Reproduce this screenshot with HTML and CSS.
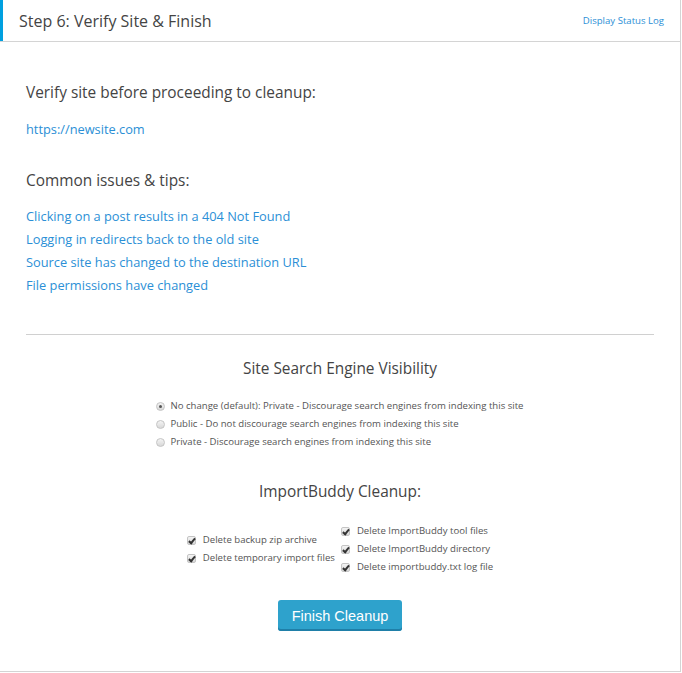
FILE: index.html
```html
<!DOCTYPE html>
<html lang="en">
<head>
  <meta charset="UTF-8" />
  <title>Step 6: Verify Site &amp; Finish</title>
  <link rel="stylesheet" href="styles.css">
</head>
<body>
  <div class="panel">
    <div class="panel-head">
      <h2>Step 6: Verify Site &amp; Finish</h2>
      <a href="#" class="status-link">Display Status Log</a>
    </div>

    <div class="panel-body">
      <h3>Verify site before proceeding to cleanup:</h3>
      <p class="site-url"><a href="#">https://newsite.com</a></p>

      <h3 class="tips-title">Common issues &amp; tips:</h3>
      <ul class="tips">
        <li><a href="#">Clicking on a post results in a 404 Not Found</a></li>
        <li><a href="#">Logging in redirects back to the old site</a></li>
        <li><a href="#">Source site has changed to the destination URL</a></li>
        <li><a href="#">File permissions have changed</a></li>
      </ul>

      <hr />

      <h3 class="center-title">Site Search Engine Visibility</h3>
      <div class="radios">
        <label><input type="radio" name="visibility" checked /> No change (default): Private - Discourage search engines from indexing this site</label>
        <label><input type="radio" name="visibility" /> Public - Do not discourage search engines from indexing this site</label>
        <label><input type="radio" name="visibility" /> Private - Discourage search engines from indexing this site</label>
      </div>

      <h3 class="center-title cleanup-title">ImportBuddy Cleanup:</h3>
      <div class="checks">
        <div class="check-col">
          <label><input type="checkbox" checked /> Delete backup zip archive</label>
          <label><input type="checkbox" checked /> Delete temporary import files</label>
        </div>
        <div class="check-col">
          <label><input type="checkbox" checked /> Delete ImportBuddy tool files</label>
          <label><input type="checkbox" checked /> Delete ImportBuddy directory</label>
          <label><input type="checkbox" checked /> Delete importbuddy.txt log file</label>
        </div>
      </div>

      <div class="actions">
        <button class="button-primary">Finish Cleanup</button>
      </div>
    </div>
  </div>
</body>
</html>
```

FILE: styles.css
```css
body {
  margin: 0;
  font-family: "Open Sans", sans-serif;
  background: #fff;
  color: #444;
}

a {
  color: #2b8fd6;
  text-decoration: none;
}

.panel {
  width: 680px;
  border-right: 1px solid #d4d4d4;
  border-bottom: 1px solid #d4d4d4;
}

.panel-head {
  height: 41px;
  border-bottom: 1px solid #d4d4d4;
  box-shadow: inset 3px 0 0 #00a0e0;
  display: flex;
  justify-content: space-between;
  align-items: center;
  padding: 0 16px 0 19px;
}

.panel-head h2 {
  margin: 0;
  font-size: 16px;
  font-weight: normal;
  color: #444;
}

.status-link {
  font-size: 9.6px;
}

.panel-body {
  padding: 39px 26px 40px;
}

h3 {
  margin: 0;
  font-size: 15.4px;
  line-height: 24px;
  font-weight: normal;
  color: #444;
}

.site-url {
  margin: 14px 0 0;
  font-size: 12.8px;
  line-height: 20px;
}

.tips-title {
  margin-top: 30px;
}

.tips {
  list-style: none;
  margin: 12px 0 0;
  padding: 0;
  font-size: 12.8px;
  line-height: 23px;
}

hr {
  margin: 37px 0 0;
  border: none;
  border-top: 1px solid #d0d0d0;
}

.center-title {
  text-align: center;
  margin-top: 22px;
}

.cleanup-title {
  margin-top: 29px;
}

/* radio list */
.radios {
  margin: 16px auto 0;
  width: fit-content;
  display: flex;
  flex-direction: column;
  font-size: 9.6px;
  line-height: 18px;
  color: #555;
}

.radios label {
  display: flex;
  align-items: center;
  white-space: nowrap;
}

/* checkbox columns */
.checks {
  margin-top: 18px;
  display: flex;
  justify-content: center;
  align-items: center;
  gap: 6px;
  font-size: 9.6px;
  line-height: 18px;
  color: #555;
}

.check-col {
  display: flex;
  flex-direction: column;
}

.check-col label {
  display: flex;
  align-items: center;
  white-space: nowrap;
}

input[type="radio"],
input[type="checkbox"] {
  appearance: none;
  margin: 0 5px 0 0;
  width: 9px;
  height: 9px;
  border: 1px solid #c4c4c4;
  background: linear-gradient(#f4f4f4, #d8d8d8);
  position: relative;
  flex-shrink: 0;
}

input[type="radio"] {
  border-radius: 50%;
}

input[type="radio"]:checked::after {
  content: "";
  position: absolute;
  left: 2px;
  top: 2px;
  width: 3px;
  height: 3px;
  border-radius: 50%;
  background: #555;
}

input[type="checkbox"] {
  border-radius: 2px;
  margin-right: 7px;
}

input[type="checkbox"]:checked::after {
  content: "";
  position: absolute;
  left: 2px;
  top: 0;
  width: 2px;
  height: 5px;
  border: solid #333;
  border-width: 0 2px 2px 0;
  transform: rotate(40deg);
}

.actions {
  margin-top: 24px;
  text-align: center;
}

.button-primary {
  font-family: "Liberation Sans", Arial, sans-serif;
  font-size: 14.5px;
  height: 31px;
  padding: 0 14px;
  border: none;
  border-radius: 3px;
  background: #2ea2cc;
  color: #fff;
  box-shadow: inset 0 -2px 0 #1f7fa8;
  cursor: pointer;
}
```
